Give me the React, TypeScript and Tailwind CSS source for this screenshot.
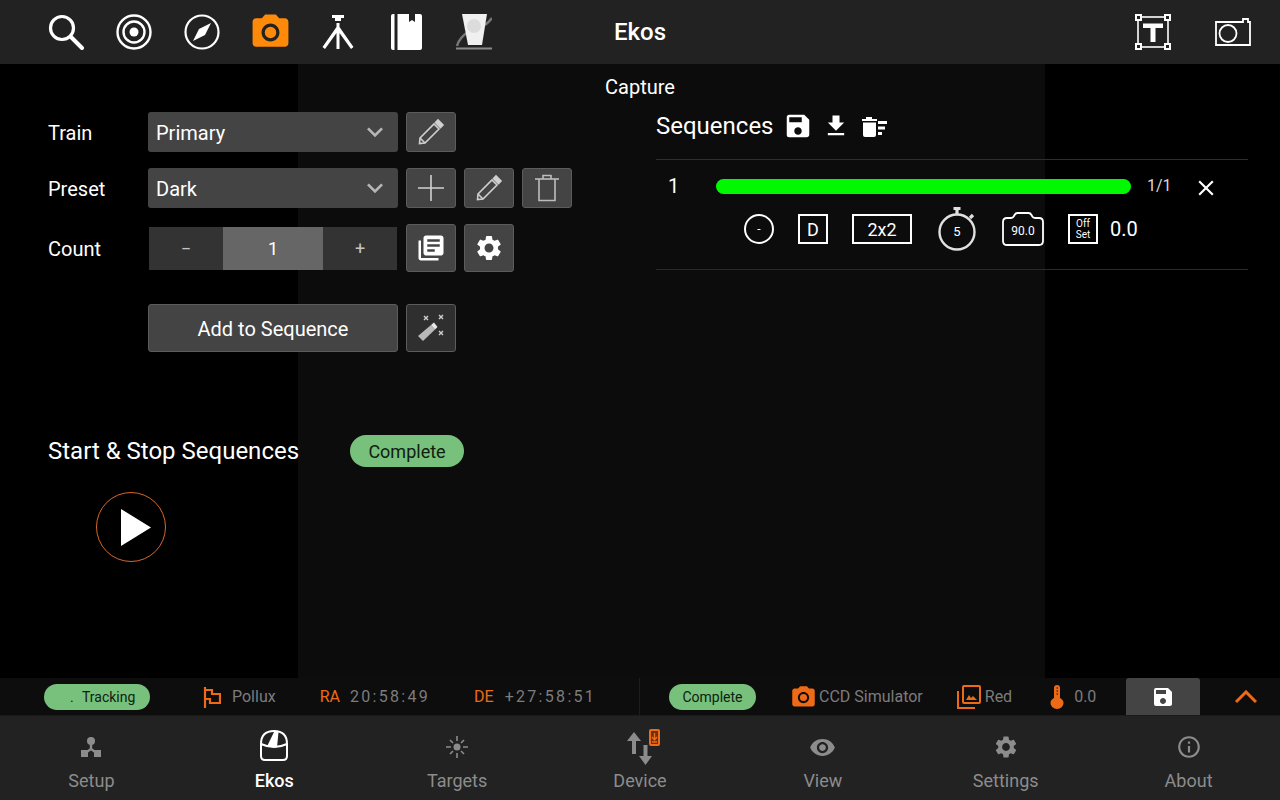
import { MdSave, MdFileDownload, MdLibraryBooks, MdSettings, MdPhotoCamera, MdVisibility, MdInfoOutline, MdClose, MdKeyboardArrowDown } from 'react-icons/md';

const ORANGE = '#ee6a17';

function SearchIcon() {
  return (
    <svg width="36" height="36" viewBox="0 0 36 36" fill="none" stroke="white" strokeWidth="3.2" strokeLinecap="round">
      <circle cx="14" cy="14" r="11.5" />
      <path d="M23 23 L34 34" strokeWidth="4" />
    </svg>
  );
}

function TargetIcon() {
  return (
    <svg width="36" height="36" viewBox="0 0 36 36" fill="none" stroke="white" strokeWidth="2.4">
      <circle cx="18" cy="18" r="16.5" />
      <circle cx="18" cy="18" r="10.5" />
      <circle cx="18" cy="18" r="4.5" fill="white" stroke="none" />
    </svg>
  );
}

function CompassIcon() {
  return (
    <svg width="36" height="36" viewBox="0 0 36 36" fill="none" stroke="white" strokeWidth="2.2">
      <circle cx="18" cy="18" r="16.5" />
      <path d="M27 9 L21 21 L9 27 L15 15 Z" fill="white" stroke="none" />
    </svg>
  );
}

function TripodIcon() {
  return (
    <svg width="32" height="36" viewBox="0 0 32 36" fill="white">
      <path d="M10 1 H22 V4 H19 V7 H13 V4 H10 Z" />
      <path d="M14.5 9 H17.5 V13 L31.5 33 L29 35 L17.5 19 V35 H14.5 V19 L3 35 L0.5 33 L14.5 13 Z" />
    </svg>
  );
}

function NotebookIcon() {
  return (
    <svg width="31" height="36" viewBox="0 0 31 36" fill="white">
      <path d="M2 0 H3.5 V36 H2 Q0 36 0 34 V2 Q0 0 2 0 Z" />
      <path d="M6.5 0 H18 V8 L21 6 L24 8 V0 H29 Q31 0 31 2 V34 Q31 36 29 36 H6.5 Z" />
    </svg>
  );
}

function FilterIcon() {
  return (
    <svg width="36" height="36" viewBox="0 0 36 36" fill="none">
      <path d="M0 34.5 H36" stroke="#8a8a8a" strokeWidth="2" />
      <path d="M1 32 Q3 24 12 18" stroke="#777" strokeWidth="2.5" />
      <path d="M29 11 Q33 8 36 4" stroke="#777" strokeWidth="2.5" />
      <path d="M6 0 H31 L26 31 H12 Z" fill="#f0f0f0" />
      <circle cx="18" cy="12" r="7" fill="#dcdcdc" />
    </svg>
  );
}

function TextFrameIcon() {
  return (
    <svg width="36" height="36" viewBox="0 0 36 36" fill="none">
      <rect x="3" y="3" width="30" height="30" stroke="white" strokeWidth="1.6" />
      <path d="M8 9.5 H28 V14 H20.5 V28 H15.5 V14 H8 Z" fill="white" />
      {[[0, 0], [29, 0], [0, 29], [29, 29]].map(([x, y]) => (
        <rect key={`${x}-${y}`} x={x + 1} y={y + 1} width="5" height="5" fill="#222" stroke="white" strokeWidth="2" />
      ))}
    </svg>
  );
}

function CameraFrameIcon() {
  return (
    <svg width="36" height="30" viewBox="0 0 36 30" fill="none" stroke="white" strokeWidth="1.8">
      <path d="M1 5 H28 V2 H33 V5 H35 V28 H1 Z" />
      <circle cx="13" cy="16.5" r="8.5" />
    </svg>
  );
}

function PencilIcon({ color = '#cfcfcf' }: { color?: string }) {
  return (
    <svg width="28" height="28" viewBox="0 0 28 28" fill="none" stroke={color} strokeWidth="1.6">
      <path d="M3 20 L17 6 L22 11 L8 25 L2.5 25.5 Z" />
      <path d="M18.5 4.5 L21 2 L26 7 L23.5 9.5 Z" fill={color} />
      <path d="M3 20 L8 25" />
    </svg>
  );
}

function TrashIcon() {
  return (
    <svg width="26" height="28" viewBox="0 0 26 28" fill="none" stroke="#bdbdbd" strokeWidth="1.6">
      <path d="M1 5 H25" />
      <path d="M9 5 V1.5 H17 V5" />
      <path d="M5 5 V26.5 H21 V5" />
    </svg>
  );
}

function WandIcon() {
  return (
    <svg width="28" height="28" viewBox="0 0 28 28" fill="none">
      <path d="M1 22 L14 11 L18 15.5 L6 27 Z" fill="#b8b8b8" />
      <path d="M14 11 L17 8.5 L20.5 13 L18 15.5 Z" fill="#e8e8e8" />
      <path d="M7 2 L11 6 M11 2 L7 6 M22 1 L26 5 M26 1 L22 5 M22 17 L26 21 M26 17 L22 21" stroke="#cfcfcf" strokeWidth="1.4" />
    </svg>
  );
}

function ClearAllIcon() {
  return (
    <svg width="26" height="22" viewBox="0 0 26 22" fill="white">
      <path d="M1 4 H5 V2 H11 V4 H16 V6 H1 Z" />
      <path d="M2 7.5 H15 V20 Q15 22 13 22 H4 Q2 22 2 20 Z" />
      <path d="M17 6 H26 V9 H17 Z M17 11.5 H24 V14.5 H17 Z M17 17 H21 V20 H17 Z" />
    </svg>
  );
}

function StopwatchChip() {
  return (
    <div className="relative flex h-[44px] w-[38px] items-center justify-center">
      <svg className="absolute inset-0" width="38" height="44" viewBox="0 0 38 44" fill="none" stroke="#e0e0e0" strokeWidth="2.4">
        <circle cx="19" cy="25" r="17.5" />
        <path d="M15.5 1.5 H22.5 M19 1.5 V7" strokeWidth="3.2" />
        <path d="M32 11 L35 8" strokeWidth="3.2" />
      </svg>
      <span className="relative mt-[6px] text-[13px] text-white">5</span>
    </div>
  );
}

function CameraChip() {
  return (
    <div className="relative flex h-[34px] w-[42px] items-center justify-center">
      <svg className="absolute inset-0" width="42" height="34" viewBox="0 0 42 34" fill="none" stroke="white" strokeWidth="1.8">
        <path d="M5 6 H9 Q11 6 12 4 L12.5 3 Q13.5 1 15.5 1 H26.5 Q28.5 1 29.5 3 L30 4 Q31 6 33 6 H37 Q41 6 41 10 V29 Q41 33 37 33 H5 Q1 33 1 29 V10 Q1 6 5 6 Z" />
      </svg>
      <span className="relative mt-[4px] text-[12px] text-white">90.0</span>
    </div>
  );
}

function FlagIcon() {
  return (
    <svg width="18" height="22" viewBox="0 0 18 22" fill="none" stroke={ORANGE} strokeWidth="2.2">
      <path d="M2 1 V22" />
      <path d="M2 4 H9 V8 H17 V17 H7 V13 H2" />
    </svg>
  );
}

function PhotosIcon() {
  return (
    <svg width="24" height="24" viewBox="0 0 24 24" fill="none" stroke={ORANGE} strokeWidth="2">
      <rect x="6" y="1" width="17" height="17" rx="1" />
      <path d="M1 6 V23 H18" />
      <path d="M9 15 L12 10 L14 13 L16 11 L20 15 Z" fill={ORANGE} stroke="none" />
    </svg>
  );
}

function ThermometerIcon() {
  return (
    <svg width="14" height="24" viewBox="0 0 14 24" fill={ORANGE}>
      <path d="M4 3 Q4 0 7 0 Q10 0 10 3 V13 Q13.5 15 13.5 18 A6.5 6 0 0 1 0.5 18 Q0.5 15 4 13 Z" />
      <path d="M6.5 3 H8 M6.5 6 H8 M6.5 9 H8" stroke="#0d0d0d" strokeWidth="1" />
    </svg>
  );
}

function SetupIcon() {
  return (
    <svg width="24" height="24" viewBox="0 0 24 24" fill="#8c8c8c">
      <circle cx="12" cy="6" r="4" />
      <rect x="2" y="15" width="7" height="7" />
      <rect x="15" y="15" width="7" height="7" />
      <path d="M12 9 V14 L5 19 M12 14 L19 19" stroke="#8c8c8c" strokeWidth="2.4" fill="none" />
    </svg>
  );
}

function DomeIcon() {
  return (
    <svg width="28" height="31" viewBox="0 0 28 31" fill="none" stroke="white" strokeWidth="2" className="mb-[3px]">
      <path d="M1 14 Q1 1 14 1 Q27 1 27 14 V26 Q27 30 23 30 H5 Q1 30 1 26 Z" />
      <path d="M1 14 Q14 20 27 14" />
      <path d="M7 16.5 L14 2 H18.5 L17 17.5 Z" fill="white" stroke="none" />
    </svg>
  );
}

function TargetsIcon() {
  return (
    <svg width="24" height="24" viewBox="0 0 24 24" stroke="#8c8c8c" strokeWidth="1.6" fill="#8c8c8c">
      <circle cx="12" cy="12" r="3.5" stroke="none" />
      <path d="M12 1 V6 M12 18 V23 M1 12 H6 M18 12 H23 M5 5 L8 8 M16 16 L19 19 M19 5 L16 8 M8 16 L5 19" />
    </svg>
  );
}

function DeviceIcon() {
  return (
    <svg width="33" height="36" viewBox="0 0 33 36" fill="none" className="ml-[7px]">
      <path d="M7 3 L0 12 H5 V25 H9 V12 H14 Z" fill="#8c8c8c" />
      <path d="M16.5 16 H20.5 V27 H25 L18.5 36 L12 27 H16.5 Z" fill="#8c8c8c" />
      <rect x="23" y="1" width="9" height="15" rx="1" fill="#6b3210" stroke={ORANGE} strokeWidth="2" />
      <path d="M27.5 4 V10 M25 8 L27.5 11 L30 8 M25 13 H30" stroke={ORANGE} strokeWidth="1.4" />
    </svg>
  );
}

function IconButton({ children, dark }: { children: React.ReactNode; dark?: boolean }) {
  return (
    <button className={`flex h-full w-[50px] items-center justify-center rounded-[3px] border border-[#5c5c5c] ${dark ? 'bg-[#2f2f2f]' : 'bg-[#444444]'}`}>
      {children}
    </button>
  );
}

function SelectBox({ value }: { value: string }) {
  return (
    <div className="flex h-full w-[250px] items-center justify-between rounded-[3px] bg-[#444444] pl-2 pr-[7px] text-[20px] text-white">
      <span className="pt-px">{value}</span>
      <MdKeyboardArrowDown size={32} color="#b5b5b5" />
    </div>
  );
}

const NAV_ITEMS = [
  { label: 'Setup', icon: <SetupIcon /> },
  { label: 'Ekos', icon: <DomeIcon />, active: true },
  { label: 'Targets', icon: <TargetsIcon /> },
  { label: 'Device', icon: <DeviceIcon /> },
  { label: 'View', icon: <MdVisibility size={27} color="#8c8c8c" /> },
  { label: 'Settings', icon: <MdSettings size={26} color="#8c8c8c" /> },
  { label: 'About', icon: <MdInfoOutline size={26} color="#8c8c8c" /> },
];

export default function App() {
  return (
    <div className="flex h-[800px] w-[1280px] flex-col overflow-hidden bg-black text-white" style={{ fontFamily: 'Roboto, sans-serif' }}>
      {/* Top toolbar */}
      <header className="grid h-16 shrink-0 grid-cols-[1fr_auto_1fr] items-center bg-[#222222]">
        <div className="flex items-center gap-[32px] pl-12">
          <SearchIcon />
          <TargetIcon />
          <CompassIcon />
          <div className="flex w-9 justify-center">
            <MdPhotoCamera size={43} color="#ff8a0a" className="shrink-0" />
          </div>
          <div className="flex w-9 justify-center"><TripodIcon /></div>
          <div className="flex w-9 justify-center"><NotebookIcon /></div>
          <FilterIcon />
        </div>
        <div className="text-[24px] font-medium">Ekos</div>
        <div className="flex items-center justify-end gap-[44px] pr-[29px]">
          <TextFrameIcon />
          <CameraFrameIcon />
        </div>
      </header>

      {/* Capture page */}
      <main className="relative flex-1">
        <div className="absolute inset-y-0 left-[298px] w-[747px] bg-[#0c0c0c]" />
        <div className="relative mb-[2px] flex h-[46px] items-center justify-center text-[20px]">Capture</div>
        <div className="relative flex">
          <section className="w-[656px] pl-12">
            <div className="flex h-10 items-center">
              <span className="w-[100px] pt-px text-[20px]">Train</span>
              <SelectBox value="Primary" />
              <div className="ml-2 h-full"><IconButton><PencilIcon /></IconButton></div>
            </div>
            <div className="mt-4 flex h-10 items-center">
              <span className="w-[100px] pt-px text-[20px]">Preset</span>
              <SelectBox value="Dark" />
              <div className="ml-2 flex h-full gap-2">
                <IconButton>
                  <svg width="26" height="26" viewBox="0 0 26 26" stroke="#d0d0d0" strokeWidth="1.6"><path d="M13 0 V26 M0 13 H26" /></svg>
                </IconButton>
                <IconButton><PencilIcon /></IconButton>
                <IconButton><TrashIcon /></IconButton>
              </div>
            </div>
            <div className="mt-4 flex h-12 items-center">
              <span className="w-[100px] pt-px text-[20px]">Count</span>
              <div className="flex h-[43px] w-[249px] pl-px text-[#c4c4c4]">
                <div className="flex w-[74px] items-center justify-center bg-[#333333] text-[18px]">−</div>
                <div className="flex w-[100px] items-center justify-center bg-[#666666] text-[18px] text-white">1</div>
                <div className="flex w-[74px] items-center justify-center bg-[#333333] text-[18px]">+</div>
              </div>
              <div className="ml-[9px] flex h-full gap-2">
                <IconButton><MdLibraryBooks size={30} color="white" /></IconButton>
                <IconButton><MdSettings size={30} color="white" /></IconButton>
              </div>
            </div>
            <div className="mt-8 flex h-12 gap-2 pl-[100px]">
              <button className="w-[250px] rounded-[3px] border border-[#5c5c5c] bg-[#444444] pt-px text-[20px]">Add to Sequence</button>
              <IconButton dark><WandIcon /></IconButton>
            </div>
            <div className="mt-[83px] flex h-8 items-center">
              <h2 className="w-[302px] text-[24px] leading-[36px]">Start &amp; Stop Sequences</h2>
              <span className="flex h-8 w-[114px] items-center justify-center rounded-full bg-[#77c17c] pt-px text-[18px] text-[#102010]">Complete</span>
            </div>
            <button className="ml-12 mt-[25px] flex size-[70px] items-center justify-center rounded-full border-[1.5px] border-[#d9682a]">
              <svg width="30" height="37" viewBox="0 0 30 37" fill="white" className="ml-[10px]"><path d="M0 0 L30 18.5 L0 37 Z" /></svg>
            </button>
          </section>

          <section className="w-[592px]">
            <div className="flex h-7 items-center">
              <h2 className="text-[24px]">Sequences</h2>
              <MdSave size={30} color="white" className="ml-[9px]" />
              <MdFileDownload size={28} color="white" className="ml-[9px]" />
              <div className="ml-[11px]"><ClearAllIcon /></div>
            </div>
            <div className="mt-[19px] border-t border-[#2e2e2e] pb-[25px] pt-[15px]">
              <div className="flex h-[22px] items-center">
                <span className="w-[60px] pl-[12px] text-[20px]">1</span>
                <div className="h-[15px] w-[415px] rounded-full bg-[#00f800]" />
                <span className="ml-4 w-[24px] text-[16px] text-[#d8d8d8]">1/1</span>
                <MdClose size={26} color="white" className="ml-[22px] mt-[4px]" />
              </div>
              <div className="ml-[88px] mt-[17px] flex h-[30px] items-center">
                <div className="flex h-[30px] w-[30px] items-center justify-center rounded-full border-2 border-white text-[12px]">-</div>
                <div className="ml-6 flex h-[30px] w-[30px] items-center justify-center border-2 border-white text-[18px]">D</div>
                <div className="ml-6 flex h-[30px] w-[60px] items-center justify-center border-2 border-white text-[18px]">2x2</div>
                <div className="ml-[26px]"><StopwatchChip /></div>
                <div className="ml-[26px]"><CameraChip /></div>
                <div className="ml-6 flex h-[30px] w-[30px] flex-col items-center justify-center border-2 border-white text-[10px] leading-[11px]">
                  <span>Off</span>
                  <span>Set</span>
                </div>
                <span className="ml-3 text-[20px]">0.0</span>
              </div>
            </div>
            <div className="border-t border-[#2a2a2a]" />
          </section>
        </div>
      </main>

      {/* Status strip */}
      <div className="flex h-[37px] shrink-0 bg-[#0d0d0d] text-[16px] text-[#7c7c7c]">
        <div className="flex w-[640px] items-center border-r border-[#1e1e1e] pl-[44px] pt-px">
          <span className="flex h-[26px] w-[106px] items-center rounded-full bg-[#77c17c] pl-[26px] text-[14px] text-[#102010]">
            <span className="w-3">.</span>Tracking
          </span>
          <span className="ml-[53px]"><FlagIcon /></span>
          <span className="ml-[11px]">Pollux</span>
          <span className="ml-[44px] text-[#ee6a17]">RA</span>
          <span className="ml-[10px] tracking-[2.3px]">20:58:49</span>
          <span className="ml-[44px] text-[#ee6a17]">DE</span>
          <span className="ml-[11px] tracking-[2.3px]">+27:58:51</span>
        </div>
        <div className="flex flex-1 items-center pl-[29px] pt-px">
          <span className="flex h-[26px] w-[87px] items-center justify-center rounded-full bg-[#77c17c] text-[14px] text-[#102010]">Complete</span>
          <MdPhotoCamera size={27} color={ORANGE} className="ml-[34px]" />
          <span className="ml-[2px]">CCD Simulator</span>
          <span className="ml-[34px]"><PhotosIcon /></span>
          <span className="ml-[4px]">Red</span>
          <span className="ml-[38px]"><ThermometerIcon /></span>
          <span className="ml-[10px]">0.0</span>
          <div className="-mt-px ml-[30px] flex h-[37px] w-[74px] items-center justify-center rounded-t-[3px] bg-[#444444]">
            <MdSave size={24} color="white" />
          </div>
          <svg width="22" height="14" viewBox="0 0 22 14" fill="none" stroke={ORANGE} strokeWidth="3" className="ml-[35px]">
            <path d="M1 12 L11 2 L21 12" />
          </svg>
        </div>
      </div>

      {/* Bottom navigation */}
      <nav className="grid h-[85px] shrink-0 grid-cols-7 border-t border-[#1a1a1a] bg-[#222222]">
        {NAV_ITEMS.map((item) => (
          <div key={item.label} className="flex flex-col items-center">
            <div className="flex h-[54px] items-center justify-center pt-[8px]">{item.icon}</div>
            <span className={`text-[18px] leading-[22px] ${item.active ? 'font-medium text-white' : 'text-[#8c8c8c]'}`}>{item.label}</span>
          </div>
        ))}
      </nav>
    </div>
  );
}
